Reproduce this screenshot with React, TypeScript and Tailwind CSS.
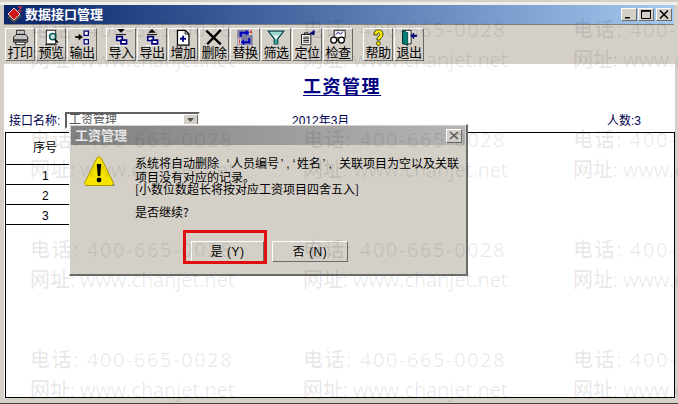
import React from "react";

const Raised = "border border-t-white border-l-white border-r-[#6a6a6a] border-b-[#6a6a6a]";

const icons: Record<string, React.ReactNode> = {
  print: (<g>
    <path d="M6 1.500h9v6H6z" fill="#fff" stroke="#000"/>
    <path d="M7 3.500h7M7 5.500h7" stroke="#777"/>
    <path d="M2.500 9.500l3-3h11l2.500 3v6H2.500z" fill="#c4c4c4" stroke="#000"/>
    <path d="M3 13h15" stroke="#000" strokeWidth="1.500"/>
    <path d="M5 15.500h11v3H5z" fill="#fff" stroke="#000"/>
  </g>),
  preview: (<g>
    <path d="M4.500 1.500h11v16h-11z" fill="#fff" stroke="#000"/>
    <path d="M3 18.500h14" stroke="#000"/>
    <circle cx="12" cy="9" r="3.600" fill="#bfe6e0" stroke="#0a5a5a" strokeWidth="1.800"/>
    <path d="M14.500 12l3.500 4" stroke="#000" strokeWidth="2"/>
  </g>),
  output: (<g>
    <path d="M2 9.500h5" stroke="#000" strokeWidth="2"/>
    <path d="M6 5.500l5 4-5 4z" fill="#000"/>
    <path d="M12.500 2.500h5v5h-5zM12.500 12.500h5v5h-5z" fill="#fff" stroke="#000080" strokeWidth="1.500"/>
  </g>),
  importI: (<g>
    <path d="M5.500 0h9l-4.500 4.500z" fill="#000"/>
    <path d="M4 6.500h12" stroke="#000"/>
    <path d="M5 9h6.500v4.500H5z" fill="#fff" stroke="#000080" strokeWidth="2"/>
    <path d="M10 13h6.500v4.500H10z" fill="#fff" stroke="#000080" strokeWidth="2"/>
    <path d="M2 20h16" stroke="#fff" strokeWidth="1.500"/>
  </g>),
  exportI: (<g>
    <path d="M5.500 4.500h9L10 0z" fill="#000"/>
    <path d="M4 6.500h12" stroke="#000"/>
    <path d="M5 9h6.500v4.500H5z" fill="#fff" stroke="#000080" strokeWidth="2"/>
    <path d="M10 13h6.500v4.500H10z" fill="#fff" stroke="#000080" strokeWidth="2"/>
    <path d="M2 20h16" stroke="#fff" strokeWidth="1.500"/>
  </g>),
  add: (<g>
    <path d="M3.500 1.500h9l4.500 4.500v13H3.500z" fill="#fff" stroke="#000" strokeWidth="1.500"/>
    <path d="M12.500 1.500v4.500H17" fill="none" stroke="#000"/>
    <path d="M10 8v7M6.500 11.500h7" stroke="#000080" strokeWidth="2.200"/>
  </g>),
  del: (<g>
    <path d="M1 2l17 16M18 1L2 18" stroke="#000" strokeWidth="2.800"/>
  </g>),
  replace: (<g>
    <path d="M1 1h18v18H1z" fill="#7c7ca0"/>
    <path d="M5 9V4.500h9" fill="none" stroke="#0000c0" strokeWidth="2.400"/>
    <path d="M11 1l4 3.500L11 8z" fill="#0000c0"/>
    <path d="M15 11v4.500H8" fill="none" stroke="#0000c0" strokeWidth="2.400"/>
    <path d="M9 12l-4 3.500L9 19z" fill="#0000c0"/>
    <path d="M2 11h3v7H2z" fill="#f0e8e8"/>
    <path d="M15 1h4v6h-4z" fill="#e0d0d0"/>
    <path d="M16 2h2v3h-2z" fill="#d02020"/>
    <path d="M3 12h1v5H3z" fill="#d02020"/>
  </g>),
  filter: (<g>
    <path d="M1 2.500h18l-7 9v6H8v-6z" fill="#e8f6f4" stroke="#004848" strokeWidth="1.500"/>
    <path d="M8.500 12h3v5.500h-3z" fill="#3aa0a0"/>
    <path d="M3 3.500h14l-3 4H6z" fill="#9fd8d0"/>
  </g>),
  locate: (<g>
    <path d="M3.500 6.500h11v12h-11z" fill="#fff" stroke="#000"/>
    <path d="M5.500 9.500h7M5.500 11.500h7M5.500 13.500h7M5.500 15.500h7" stroke="#000"/>
    <path d="M7 7V4.500h4V7" fill="none" stroke="#000"/>
    <path d="M12 6l7-5v6z" fill="#000080"/>
  </g>),
  check: (<g>
    <path d="M5.500 1.500h13v9h-13z" fill="#fff" stroke="#000"/>
    <path d="M7 7l3-3 3 2 3-3" fill="none" stroke="#000080"/>
    <circle cx="5" cy="13" r="3.500" fill="#fff" stroke="#000" strokeWidth="1.500"/>
    <circle cx="14" cy="13" r="3.500" fill="#fff" stroke="#000" strokeWidth="1.500"/>
    <path d="M8 13h3" stroke="#000" strokeWidth="1.500"/>
  </g>),
  help: (<g>
    <path d="M5 7C5 3 7.500 1 10.500 1S16 3 16 6.500c0 3.500-3.500 4-3.500 6.500h-4c0-3.500 3.500-4.500 3.500-6.700 0-1-.6-1.800-1.400-1.800S9 5.300 9 7z" fill="#ffef00" stroke="#303000"/>
    <circle cx="10.500" cy="17" r="2.300" fill="#ffef00" stroke="#303000"/>
  </g>),
  exit: (<g>
    <path d="M2.500 1.500h10v16h-10z" fill="#fff" stroke="#000"/>
    <path d="M2.500 1.500l6 3v15l-6-3z" fill="#008078" stroke="#003030"/>
    <path d="M19.500 8h-4" stroke="#000080" strokeWidth="2.400"/>
    <path d="M16 4l-4.500 4 4.500 4z" fill="#000080"/>
  </g>),
};

function ToolButton({ label, icon }: { label: string; icon: string }) {
  return (
    <div className={`w-[30px] h-[33px] mr-px flex flex-col items-center shrink-0 ${Raised}`}>
      <svg width="20" height="17" viewBox="0 0 20 20" className="shrink-0">{icons[icon]}</svg>
      <span className="text-[13px] leading-[13px] text-black whitespace-nowrap tracking-[-0.5px]">{label}</span>
    </div>
  );
}

function WinButton({ children }: { children: React.ReactNode }) {
  return (
    <div className={`w-[16px] h-[13px] bg-[#d4d0c8] flex items-center justify-center ${Raised}`}>
      <svg width="10" height="9" viewBox="0 0 10 9">{children}</svg>
    </div>
  );
}

function Watermark() {
  const rows = [30, 140, 250, 360];
  const cols = [30, 303, 573];
  return (
    <div
      className="absolute inset-0 pointer-events-none overflow-hidden text-black/[0.09] text-[20px] leading-[24px] font-medium"
      style={{ fontFamily: '"Open Sans", "Noto Sans CJK SC", sans-serif' }}
    >
      {rows.map((y) =>
        cols.map((x) => (
          <React.Fragment key={`${x}-${y}`}>
            <div className="absolute whitespace-pre tracking-[1.600px]" style={{ left: x, top: y - 12 }}>电话: 400-665-0028</div>
            <div className="absolute whitespace-pre tracking-[-0.100px]" style={{ left: x, top: y + 18 }}>网址: www.chanjet.net</div>
          </React.Fragment>
        ))
      )}
    </div>
  );
}

function DialogButton({ children, className = "" }: { children: React.ReactNode; className?: string }) {
  return (
    <div className={`h-[21px] bg-[#d4d0c8] text-[12px] text-black flex items-center justify-center tracking-[0.5px] ${Raised} ${className}`}>
      {children}
    </div>
  );
}

function Half({ c }: { c: string }) {
  return <span className="inline-block w-[6px] text-center" style={{ fontFamily: '"Liberation Sans", sans-serif' }}>{c}</span>;
}

function Dialog() {
  return (
    <div className={`absolute left-[69px] top-[124px] w-[399px] h-[152px] bg-[#d4d0c8] p-[1px] ${Raised} border-r-2 border-b-2`}>
      <div className="h-[19px] bg-gradient-to-r from-[#808080] to-[#b5b5b5] flex items-center pl-[4px] pr-[3px] justify-between">
        <span className="text-[13px] font-bold text-[#e8e8e8]">工资管理</span>
        <div className={`w-[16px] h-[14px] bg-[#d4d0c8] flex items-center justify-center ${Raised}`}>
          <svg width="10" height="9" viewBox="0 0 10 9"><path d="M1 1l8 7M9 1L1 8" stroke="#555" strokeWidth="1.400" /></svg>
        </div>
      </div>
      <div className="flex pl-[13px] pt-[10px]">
        <svg width="32" height="34" viewBox="0 0 32 34" className="shrink-0">
          <path d="M16 3L31 31H3z" fill="#5a5a48" opacity=".6" />
          <path d="M15 2c1 0 2 .6 2.600 2L29 27c.8 2-.2 3.500-2 3.500H3c-1.800 0-2.800-1.500-2-3.500L12.400 4c.6-1.400 1.600-2 2.600-2z" fill="#f6e400" stroke="#a89800" />
          <path d="M12.800 9h4.400l-1 12h-2.400z" fill="#000" />
          <circle cx="15" cy="25" r="2.400" fill="#000" />
        </svg>
        <div className="ml-[19px] pt-[2px] text-[12px] leading-[12.500px] text-black whitespace-pre" style={{ fontFamily: '"Noto Sans CJK SC", sans-serif' }}>
          <div>系统将自动删除<Half c=" " /><Half c="‘" />人员编号<Half c="’" /><Half c="," /><Half c="‘" />姓名<Half c="’" /><Half c="," /><Half c=" " />关联项目为空以及关联</div>
          <div>项目没有对应的记录。</div>
          <div>[小数位数超长将按对应工资项目四舍五入]</div>
          <div className="mt-[10px]">是否继续?</div>
        </div>
      </div>
      <div className="flex pl-[120px] gap-[8px] mt-[23px]">
        <DialogButton className="w-[73px]">是 (Y)</DialogButton>
        <DialogButton className="w-[76px]">否 (N)</DialogButton>
      </div>
      <div className="absolute left-[113px] top-[105px] w-[84px] h-[34px] border-[3px] border-[#e01010]" />
    </div>
  );
}

export default function App() {
  return (
    <div className="relative w-[678px] h-[404px] overflow-hidden bg-[#d4d0c8] flex flex-col text-[12px] border-b border-b-[#404040]" style={{ fontFamily: '"Liberation Sans", "Noto Sans CJK SC", sans-serif' }}>
      <div className="h-[5px] shrink-0 bg-[#f0eee8] border-t-2 border-[#d4d0c8]" />
      <div className="h-[19px] shrink-0 mx-[4px] bg-gradient-to-r from-[#0a246a] to-[#a6caf0] flex items-center pl-[2px] pr-[2px]">
        <svg width="18" height="18" viewBox="0 0 18 18" className="shrink-0">
          <path d="M1 11l8-6 7 5-8 7z" fill="#4a4a4a" />
          <path d="M2 8l6-6 6 6-6 6z" fill="#d01818" stroke="#fff" strokeWidth=".8" />
          <path d="M12 1h4l-4 4h4" fill="none" stroke="#ff3030" />
        </svg>
        <span className="ml-[1px] text-[13px] font-bold text-white">数据接口管理</span>
        <div className="ml-auto flex">
          <WinButton><path d="M1 7h5v1.500H1z" fill="#000" /></WinButton>
          <div className="w-px" />
          <WinButton><path d="M.5 .5h9v8h-9z" fill="none" stroke="#000" /><path d="M0 1h10" stroke="#000" strokeWidth="1.500" /></WinButton>
          <div className="w-[2px]" />
          <WinButton><path d="M1 .5l8 8M9 .5l-8 8" stroke="#000" strokeWidth="1.500" /></WinButton>
        </div>
      </div>
      <div className="h-[40px] shrink-0 mx-[4px] pt-[3px] flex items-start pl-[1px] border-t border-[#808080]">
        <ToolButton label="打印" icon="print" />
        <ToolButton label="预览" icon="preview" />
        <ToolButton label="输出" icon="output" />
        <div className="w-[8px] shrink-0" />
        <ToolButton label="导入" icon="importI" />
        <ToolButton label="导出" icon="exportI" />
        <ToolButton label="增加" icon="add" />
        <ToolButton label="删除" icon="del" />
        <ToolButton label="替换" icon="replace" />
        <ToolButton label="筛选" icon="filter" />
        <ToolButton label="定位" icon="locate" />
        <ToolButton label="检查" icon="check" />
        <div className="w-[9px] shrink-0" />
        <ToolButton label="帮助" icon="help" />
        <ToolButton label="退出" icon="exit" />
      </div>
      <div className="flex-1 mx-[4px] mb-[5px] bg-white flex flex-col min-h-0 w-[671px]">
        <div className="h-[46px] shrink-0 flex items-start justify-center pt-[11px]">
          <span className="text-[18px] leading-[24px] font-bold text-[#000080] underline underline-offset-2 ml-[5px] tracking-[1.500px]">工资管理</span>
        </div>
        <div className="h-[22px] shrink-0 flex items-center pl-[5px] text-[#000050]">
          <span className="w-[56px]">接口名称:</span>
          <div className="w-[135px] h-[17px] -mt-[2px] border-2 border-t-[#606060] border-l-[#606060] border-b-white border-r-white bg-white flex items-center justify-between text-[#555] pl-[2px]">
            <span>工资管理</span>
            <div className={`w-[15px] h-[13px] bg-[#d4d0c8] flex items-center justify-center ${Raised}`}>
              <svg width="7" height="4" viewBox="0 0 7 4"><path d="M0 0h7L3.500 4z" fill="#555" /></svg>
            </div>
          </div>
          <span className="ml-[92px] w-[315px]">2012年3月</span>
          <span>人数:3</span>
        </div>
        <div className="flex-1 ml-[1px] border border-black bg-white text-[12px] text-black">
          <div className="w-[400px] h-[32px] border-b border-black flex items-center pl-[27px] pb-[2px]">序号</div>
          {["1", "2", "3"].map((n) => (
            <div key={n} className="w-[400px] h-[20px] border-b border-black flex items-center pl-[36px] pt-[2px]">{n}</div>
          ))}
        </div>
      </div>
      <Dialog />
      <Watermark />
    </div>
  );
}
